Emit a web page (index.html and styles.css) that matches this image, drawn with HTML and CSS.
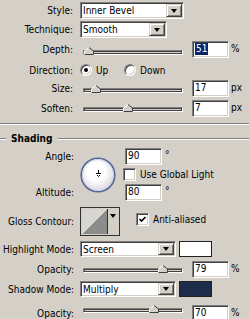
FILE: index.html
```html
<!DOCTYPE html>
<html>
<head>
<meta charset="utf-8">
<link rel="stylesheet" href="styles.css">
</head>
<body>
<div class="panel">
  <div class="row r-style">
    <span class="label">Style:</span>
    <div class="select w-style"><span class="val">Inner Bevel</span><span class="btn"><i class="arrow"></i></span></div>
  </div>
  <div class="row r-tech">
    <span class="label">Technique:</span>
    <div class="select w-tech"><span class="val">Smooth</span><span class="btn"><i class="arrow"></i></span></div>
  </div>
  <div class="row r-depth">
    <span class="label">Depth:</span>
    <div class="slider"><div class="track"></div><svg class="thumb" style="left:5.5%" width="10" height="8" viewBox="0 0 10 8"><polygon points="0.5,7.5 0.5,4 5,0.5 9.5,4 9.5,7.5" fill="#d4d0c8"/><polyline points="0.5,7.5 0.5,4 5,0.5" fill="none" stroke="#fff"/><polyline points="5,0.5 9.5,4 9.5,7.5 0.5,7.5" fill="none" stroke="#404040"/></svg></div>
    <div class="field"><span class="sel">51</span></div>
    <span class="unit">%</span>
  </div>
  <div class="row r-dir">
    <span class="label">Direction:</span>
    <span class="opt"><i class="radio on"></i><span>Up</span></span>
    <span class="opt"><i class="radio"></i><span>Down</span></span>
  </div>
  <div class="row r-size">
    <span class="label">Size:</span>
    <div class="slider"><div class="track"></div><svg class="thumb" style="left:12.5%" width="10" height="8" viewBox="0 0 10 8"><polygon points="0.5,7.5 0.5,4 5,0.5 9.5,4 9.5,7.5" fill="#d4d0c8"/><polyline points="0.5,7.5 0.5,4 5,0.5" fill="none" stroke="#fff"/><polyline points="5,0.5 9.5,4 9.5,7.5 0.5,7.5" fill="none" stroke="#404040"/></svg></div>
    <div class="field">17</div>
    <span class="unit">px</span>
  </div>
  <div class="row r-soften">
    <span class="label">Soften:</span>
    <div class="slider"><div class="track"></div><svg class="thumb" style="left:44.5%" width="10" height="8" viewBox="0 0 10 8"><polygon points="0.5,7.5 0.5,4 5,0.5 9.5,4 9.5,7.5" fill="#d4d0c8"/><polyline points="0.5,7.5 0.5,4 5,0.5" fill="none" stroke="#fff"/><polyline points="5,0.5 9.5,4 9.5,7.5 0.5,7.5" fill="none" stroke="#404040"/></svg></div>
    <div class="field">7</div>
    <span class="unit">px</span>
  </div>

  <div class="sep"></div>

  <div class="legend"><span class="lline short"></span><span class="ltext">Shading</span><span class="lline"></span></div>

  <div class="angle">
    <span class="label a1">Angle:</span>
    <div class="dial">
      <svg width="36" height="36" viewBox="0 0 36 36">
        <defs>
          <radialGradient id="dg" cx="45%" cy="40%" r="60%">
            <stop offset="0.45" stop-color="#ffffff"/>
            <stop offset="1" stop-color="#d6d6de"/>
          </radialGradient>
        </defs>
        <circle cx="18" cy="18" r="16.8" fill="url(#dg)" stroke="#56669a" stroke-width="1.6"/>
        <circle cx="18" cy="18" r="15.6" fill="none" stroke="#c4c8d8" stroke-width="0.8"/>
        <line x1="18.5" y1="13" x2="18.5" y2="17" stroke="#000" stroke-width="1"/>
        <line x1="16" y1="16.5" x2="21" y2="16.5" stroke="#000" stroke-width="1"/>
        <polyline points="17,18 18.5,19.5 20,18" fill="none" stroke="#000" stroke-width="1"/>
      </svg>
    </div>
    <div class="ar a1"><div class="field f-angle">90</div><span class="deg">°</span></div>
    <div class="ar a2"><i class="check"></i><span class="ctext">Use Global Light</span></div>
    <span class="label a3">Altitude:</span>
    <div class="ar a3"><div class="field f-angle">80</div><span class="deg">°</span></div>
  </div>

  <div class="row r-contour">
    <span class="label wide">Gloss Contour:</span>
    <div class="contour"><div class="preview"></div><div class="cbtn"><i class="arrow"></i></div></div>
    <i class="check on aa"><svg width="9" height="9" viewBox="0 0 9 9"><polyline points="1.5,4 3.5,6 7.5,2" fill="none" stroke="#000" stroke-width="1.7"/></svg></i>
    <span class="ctext">Anti-aliased</span>
  </div>

  <div class="row r-hl">
    <span class="label wide">Highlight Mode:</span>
    <div class="select w-mode"><span class="val">Screen</span><span class="btn"><i class="arrow"></i></span></div>
    <div class="swatch sw-white"></div>
  </div>
  <div class="row r-op1">
    <span class="label wide">Opacity:</span>
    <div class="slider"><div class="track"></div><svg class="thumb" style="left:79.5%" width="10" height="8" viewBox="0 0 10 8"><polygon points="0.5,7.5 0.5,4 5,0.5 9.5,4 9.5,7.5" fill="#d4d0c8"/><polyline points="0.5,7.5 0.5,4 5,0.5" fill="none" stroke="#fff"/><polyline points="5,0.5 9.5,4 9.5,7.5 0.5,7.5" fill="none" stroke="#404040"/></svg></div>
    <div class="field">79</div>
    <span class="unit">%</span>
  </div>
  <div class="row r-sh">
    <span class="label wide">Shadow Mode:</span>
    <div class="select w-mode"><span class="val">Multiply</span><span class="btn"><i class="arrow"></i></span></div>
    <div class="swatch sw-navy"></div>
  </div>
  <div class="row r-op2">
    <span class="label wide">Opacity:</span>
    <div class="slider"><div class="track"></div><svg class="thumb" style="left:70.5%" width="10" height="8" viewBox="0 0 10 8"><polygon points="0.5,7.5 0.5,4 5,0.5 9.5,4 9.5,7.5" fill="#d4d0c8"/><polyline points="0.5,7.5 0.5,4 5,0.5" fill="none" stroke="#fff"/><polyline points="5,0.5 9.5,4 9.5,7.5 0.5,7.5" fill="none" stroke="#404040"/></svg></div>
    <div class="field">70</div>
    <span class="unit">%</span>
  </div>
</div>
</body>
</html>
```

FILE: styles.css
```css
html, body {
  margin: 0;
  padding: 0;
  background: #d4d0c8;
}
body {
  width: 249px;
  height: 319px;
  overflow: hidden;
}
.panel {
  font-family: "DejaVu Sans Condensed", "DejaVu Sans", sans-serif;
  font-size: 10px;
  color: #000;
  padding-top: 2px;
}
.row {
  display: flex;
  align-items: center;
  height: 17px;
}
.label {
  flex: none;
  width: 73px;
  margin-right: 7px;
  text-align: right;
  white-space: nowrap;
}
.label.wide {
  width: 74px;
  margin-right: 6px;
}

/* row spacing */
.r-style { margin-top: 0; }
.r-tech { margin-top: 2px; }
.r-depth { margin-top: 3px; }
.r-dir { margin-top: 3px; height: 18px; }
.r-size { margin-top: 1px; }
.r-soften { margin-top: 3px; }
.r-contour { margin-top: 6px; height: 29px; }
.r-hl { margin-top: 5px; height: 16px; }
.r-op1 { margin-top: 4px; }
.r-sh { margin-top: 3px; height: 16px; }
.r-op2 { margin-top: 8px; }

/* sunken select */
.select {
  box-sizing: border-box;
  display: flex;
  align-items: stretch;
  height: 17px;
  padding: 1px;
  background: #fff;
  border: 1px solid;
  border-color: #808080 #fff #fff #808080;
  box-shadow: inset 1px 1px #404040, inset -1px -1px #d4d0c8;
}
.r-hl .select, .r-sh .select { height: 16px; }
.select .val {
  flex: 1;
  padding-left: 1px;
  line-height: 13px;
  white-space: nowrap;
  overflow: hidden;
}
.w-style { width: 104px; }
.w-tech { width: 87px; }
.w-mode { width: 96px; }
.btn {
  box-sizing: border-box;
  width: 16px;
  display: flex;
  align-items: center;
  justify-content: center;
  background: #d4d0c8;
  border: 1px solid;
  border-color: #d4d0c8 #404040 #404040 #d4d0c8;
  box-shadow: inset 1px 1px #fff, inset -1px -1px #808080;
}
.arrow {
  display: block;
  width: 0;
  height: 0;
  border-top: 4px solid #000;
  border-left: 3.5px solid transparent;
  border-right: 3.5px solid transparent;
}

/* slider */
.slider {
  position: relative;
  flex: none;
  align-self: flex-start;
  width: 100px;
  height: 8px;
  margin-left: 3px;
  padding-top: 3px;
  box-sizing: border-box;
}
.track {
  box-sizing: border-box;
  height: 5px;
  border: 1px solid;
  border-color: #808080 #fff #fff #808080;
  box-shadow: inset 1px 1px #404040, inset -1px -1px #404040;
  background: #d4d0c8;
}
.thumb {
  position: absolute;
  top: 0;
  margin-left: -5px;
  display: block;
}
.r-depth .slider { margin-top: 6px; }
.r-size .slider { margin-top: 5px; }
.r-soften .slider { margin-top: 4px; }
.r-op1 .slider { margin-top: 4px; }
.r-op2 .slider { margin-top: 0; }

/* text field */
.field {
  box-sizing: border-box;
  flex: none;
  width: 37px;
  height: 17px;
  margin-left: 9px;
  padding-left: 2px;
  line-height: 13px;
  background: #fff;
  border: 1px solid;
  border-color: #808080 #fff #fff #808080;
  box-shadow: inset 1px 1px #404040, inset -1px -1px #d4d0c8;
}
.sel {
  display: inline-block;
  background: #0a246a;
  color: #fff;
  padding: 0 1px 0 1px;
  line-height: 12px;
}
.unit {
  margin-left: 2px;
  align-self: flex-start;
  margin-top: 2px;
}

/* radio */
.opt {
  display: flex;
  align-items: center;
  width: 44px;
}
.opt:first-of-type { margin-left: 1px; }
.radio {
  box-sizing: border-box;
  position: relative;
  width: 12px;
  height: 12px;
  margin-right: 4px;
  border-radius: 50%;
  background: #fff;
  border: 1px solid;
  border-color: #808080 #fff #fff #808080;
  box-shadow: inset 1px 1px #404040, inset -1px -1px #d4d0c8;
}
.radio.on::after {
  content: "";
  position: absolute;
  left: 3px;
  top: 3px;
  width: 4px;
  height: 4px;
  border-radius: 50%;
  background: #000;
}

/* separators */
.sep {
  margin-top: 6px;
  height: 0;
  border-top: 1px solid #808080;
  border-bottom: 1px solid #fff;
}
.legend {
  margin-top: 8px;
  height: 11px;
  display: flex;
  align-items: center;
}
.lline {
  flex: 1;
  height: 0;
  border-top: 1px solid #808080;
  border-bottom: 1px solid #fff;
}
.lline.short {
  flex: none;
  width: 6px;
}
.ltext {
  font-weight: bold;
  margin: 0 6px 0 5px;
  line-height: 11px;
}

/* angle block */
.angle {
  margin-top: 4px;
  display: grid;
  grid-template-columns: 74px 42px 1fr;
  grid-template-rows: 17px 15px 17px;
  row-gap: 2px;
}
.angle .label {
  width: auto;
  margin: 0;
  grid-column: 1;
  align-self: center;
}
.label.a1 { grid-row: 1; }
.label.a3 { grid-row: 3; }
.dial {
  grid-column: 2;
  grid-row: 1 / 4;
  justify-self: end;
  align-self: start;
  margin-top: 9px;
  width: 36px;
  height: 36px;
}
.dial svg { display: block; }
.ar {
  grid-column: 3;
  display: flex;
  align-items: center;
}
.ar.a1 { grid-row: 1; }
.ar.a2 { grid-row: 2; padding-left: 7px; }
.ar.a3 { grid-row: 3; }
.f-angle { margin-left: 9px; }
.deg {
  margin-left: 3px;
  align-self: flex-start;
  margin-top: 1px;
}

/* checkbox */
.check {
  box-sizing: border-box;
  flex: none;
  display: flex;
  align-items: center;
  justify-content: center;
  width: 13px;
  height: 13px;
  background: #fff;
  border: 1px solid;
  border-color: #808080 #fff #fff #808080;
  box-shadow: inset 1px 1px #404040, inset -1px -1px #d4d0c8;
}
.check svg { display: block; }
.ctext {
  margin-left: 4px;
  white-space: nowrap;
}
.check.aa {
  align-self: flex-start;
  margin-top: 6px;
  margin-left: 16px;
}
.r-contour .ctext {
  align-self: flex-start;
  margin-top: 7px;
}

/* contour */
.contour {
  box-sizing: border-box;
  flex: none;
  display: flex;
  width: 40px;
  height: 29px;
  padding: 1px;
  border: 1px solid #303030;
  background: #d4d0c8;
}
.preview {
  flex: 1;
  border-right: 1px solid #303030;
  background: linear-gradient(to top left, #8c8c8c 50%, #d8d6d0 50%);
}
.cbtn {
  width: 10px;
  display: flex;
  justify-content: center;
  align-items: flex-start;
  padding-top: 5px;
}

/* swatches */
.swatch {
  box-sizing: border-box;
  flex: none;
  width: 33px;
  height: 16px;
  margin-left: 3px;
  border: 1px solid #202020;
}
.sw-white { background: #fff; }
.sw-navy { background: #1d2c4b; }
```
